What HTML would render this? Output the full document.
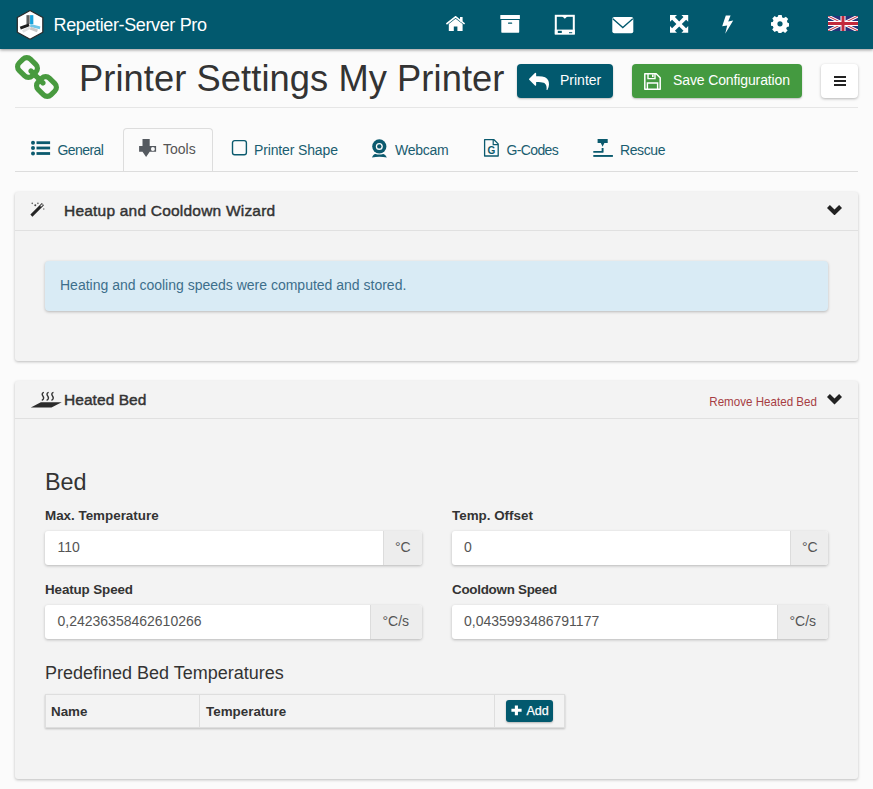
<!DOCTYPE html>
<html><head><meta charset="utf-8">
<style>
*{box-sizing:border-box;margin:0;padding:0}
html,body{width:873px;height:789px;overflow:hidden;background:#fbfbfb;font-family:"Liberation Sans",sans-serif;color:#333}
.a{position:absolute}
.t{position:absolute;white-space:nowrap;line-height:1}
#hdr{left:0;top:0;width:873px;height:49px;background:#02596e;box-shadow:0 1px 3px rgba(0,0,0,.42);z-index:5}
.btn{position:absolute;border-radius:4px;box-shadow:0 1px 2px rgba(0,0,0,.25)}
.panel{position:absolute;left:15px;width:843px;background:#f3f3f3;border-radius:3px;box-shadow:0 1px 3px rgba(0,0,0,.25)}
.ph{position:absolute;left:0;top:0;width:843px;border-bottom:1px solid #e0e0e0}
.lbl{font-weight:bold;font-size:13.4px;color:#333}
.inp{position:absolute;height:34px;background:#fff;border-radius:3px;box-shadow:0 1px 3px rgba(0,0,0,.25);overflow:hidden}
.addon{position:absolute;top:0;right:0;height:34px;background:#ededed;border-left:1px solid #dcdcdc}
.val{font-size:14px;color:#555}
.tab{font-size:14px;color:#1a5d70}
</style></head><body>
<div id="hdr" class="a">
<svg class="a" style="left:12px;top:6px" width="38" height="38" viewBox="0 0 789 789">
<polygon points="375,95 640,240 640,545 375,690 110,545 110,240" fill="#fff" stroke="#2a2a2a" stroke-width="26" stroke-linejoin="round"/>
<path d="M333 190 V378" stroke="#5f5f5f" stroke-width="66"/>
<path d="M409 190 V378" stroke="#17a3dc" stroke-width="68"/>
<path d="M172 458 L355 392" stroke="#1e1e1e" stroke-width="62"/>
<path d="M380 402 L584 455" stroke="#6ec6e8" stroke-width="56"/>
<path d="M222 530 L370 450" stroke="#e2e2e2" stroke-width="56"/>
<path d="M380 458 L528 515" stroke="#c9c9c9" stroke-width="60"/>
</svg>
<div class="t" style="left:53.5px;top:16px;font-size:18px;letter-spacing:-0.37px;color:#fff">Repetier-Server Pro</div>
<svg class="a" style="left:446px;top:16px" width="19" height="15" viewBox="0 0 19 15">
<path d="M0.4 8 L9.6 0.8 L18.6 8" fill="none" stroke="#fff" stroke-width="1.6" stroke-linejoin="miter"/>
<rect x="14" y="1" width="2.6" height="4.5" fill="#fff"/>
<path d="M2.8 8 L9.6 2.7 L16.6 8 V15 H11.4 V10.6 H7.8 V15 H2.8 Z" fill="#fff"/>
</svg>
<svg class="a" style="left:500px;top:15px" width="20" height="18" viewBox="0 0 20 18">
<rect x="0.3" y="0" width="19.6" height="4.1" fill="#fff" rx="0.3"/>
<rect x="1.3" y="4.9" width="17.9" height="12.8" fill="#fff" rx="0.6"/>
<rect x="8" y="7.4" width="4.2" height="1.4" fill="#02596e" rx="0.5"/>
</svg>
<svg class="a" style="left:554px;top:14px" width="22" height="21" viewBox="0 0 22 21">
<rect x="1.8" y="1.8" width="18" height="17.4" fill="none" stroke="#fff" stroke-width="2"/>
<rect x="0.8" y="15.6" width="20" height="5" fill="#fff"/>
<rect x="3.8" y="16.8" width="4" height="2.2" fill="#02596e"/>
<rect x="15" y="18.2" width="3.2" height="1" fill="#02596e"/>
<path d="M7.6 1.8 L10.8 4.8 L14 1.8 Z" fill="#fff"/>
</svg>
<svg class="a" style="left:611.5px;top:16.5px" width="22" height="17" viewBox="0 0 22 17">
<rect x="0.3" y="0" width="21" height="16.3" rx="2" fill="#fff"/>
<path d="M0.8 1.8 L10.8 10.6 L20.8 1.8" fill="none" stroke="#02596e" stroke-width="1.3"/>
</svg>
<svg class="a" style="left:670px;top:15px" width="19" height="18" viewBox="0 0 19 18">
<path d="M0 0 H7 L4.9 2.1 L9.2 6.4 L13.5 2.1 L11.4 0 H18.2 V6.8 L16.1 4.7 L11.8 9 L16.1 13.2 L18.2 11.1 V17.8 H11.4 L13.5 15.7 L9.2 11.4 L4.9 15.7 L7 17.8 H0 V11.1 L2.1 13.2 L6.4 9 L2.1 4.7 L0 6.8 Z" fill="#fff"/>
</svg>
<svg class="a" style="left:722px;top:15px" width="12" height="19" viewBox="0 0 120 190">
<path d="M38 5 H86 L62 66 L112 56 L32 188 L52 104 L2 112 Z" fill="#fff"/>
</svg>
<svg class="a" style="left:771px;top:15px" width="18" height="18" viewBox="0 0 18 18">
<path fill="#fff" fill-rule="evenodd" d="M7.3 0 H10.7 L11.2 2.4 L12.9 3.1 L14.9 1.8 L17.2 4.1 L15.9 6.1 L16.6 7.8 L18 8.2 V11.6 L15.9 12 L15.2 13.7 L16.6 15.6 L14.1 18 L12.2 16.6 L10.6 17.3 V18 H7.4 L7 16.6 L5.3 15.9 L3.6 17.1 L1.2 14.6 L2.5 12.8 L1.8 11.1 L0 10.7 V7.3 L1.8 6.9 L2.5 5.2 L1.3 3.5 L3.7 1.1 L5.4 2.3 L7 1.6 Z M9 6.2 A2.6 2.6 0 1 0 9 11.4 A2.6 2.6 0 1 0 9 6.2 Z"/>
</svg>
<svg class="a" style="left:828px;top:16px" width="30" height="15" viewBox="0 0 60 30" preserveAspectRatio="none">
<rect width="60" height="30" fill="#27337a"/>
<path d="M0,0 L60,30 M60,0 L0,30" stroke="#fff" stroke-width="6"/>
<path d="M0,0 L60,30 M60,0 L0,30" stroke="#c22a3c" stroke-width="2"/>
<path d="M30,0 V30 M0,15 H60" stroke="#fff" stroke-width="10"/>
<path d="M30,0 V30 M0,15 H60" stroke="#c22a3c" stroke-width="6"/>
</svg>
</div>
<svg class="a" style="left:15.2px;top:54.9px" width="44" height="44" viewBox="80 16 1632 1632"><path fill="#489a3f" d="M1520 1216q0-40-28-68l-208-208q-28-28-68-28-42 0-72 32 3 3 19 18.5t21.5 21.5 15 19 13 25.5 3.5 27.5q0 40-28 68t-68 28q-15 0-27.5-3.5t-25.5-13-19-15-21.5-21.5-18.5-19q-33 31-33 73 0 40 28 68l206 207q27 27 68 27 40 0 68-26l147-146q28-28 28-67zm-703-705q0-40-28-68l-206-207q-28-28-68-28-39 0-68 27l-147 146q-28 28-28 67 0 40 28 68l208 208q27 27 68 27 42 0 72-31-3-3-19-18.5t-21.5-21.5-15-19-13-25.5-3.5-27.5q0-40 28-68t68-28q15 0 27.5 3.5t25.5 13 19 15 21.5 21.5 18.5 19q33-31 33-73zm895 705q0 120-85 203l-147 146q-83 83-203 83-121 0-204-85l-206-207q-83-83-83-203 0-123 88-209l-88-88q-86 88-208 88-120 0-204-84l-208-208q-84-84-84-204t85-203l147-146q83-83 203-83 121 0 204 85l206 207q83 83 83 203 0 123-88 209l88 88q86-88 208-88 120 0 204 84l208 208q84 84 84 204z"/></svg>
<div class="t" style="left:79px;top:61.3px;font-size:36.3px;color:#333;letter-spacing:0.07px">Printer Settings My Printer</div>
<div class="btn" style="left:517px;top:64px;width:96px;height:34px;background:#02596e">
<svg class="a" style="left:12px;top:7.8px" width="20" height="18" viewBox="0 0 1792 1600"><path fill="#fff" d="M1792 1120q0 166-127 451-3 7-10.5 24t-13.5 30-13 22q-12 17-28 17-15 0-23.5-10t-8.5-25q0-9 2.5-26.5t2.5-23.5q5-68 5-123 0-101-17.5-181t-48.5-138.5-80-101-105.5-69.5-133-42.5-154-21.5-175.5-6h-224v256q0 26-19 45t-45 19-45-19l-512-512q-19-19-19-45t19-45l512-512q19-19 45-19t45 19 19 45v256h224q713 0 875 403 53 134 53 333z"/></svg>
<div class="t" style="left:43px;top:9px;font-size:14px;color:#fff">Printer</div>
</div>
<div class="btn" style="left:632px;top:64px;width:170px;height:34px;background:#449a40">
<svg class="a" style="left:12.4px;top:9px" width="17" height="17" viewBox="0 0 17 17">
<path d="M0.8 0.8 H12.2 L16.2 4.8 V16.2 H0.8 Z" fill="none" stroke="#fff" stroke-width="1.5" stroke-linejoin="round"/>
<path d="M4 0.8 V5.6 H11 V0.8" fill="none" stroke="#fff" stroke-width="1.4"/>
<rect x="8" y="1.5" width="1.6" height="2.6" fill="#fff"/>
<path d="M3.4 16.2 V10 H13.6 V16.2" fill="none" stroke="#fff" stroke-width="1.4"/>
</svg>
<div class="t" style="left:41px;top:9px;font-size:14px;color:#fff;letter-spacing:-0.12px">Save Configuration</div>
</div>
<div class="btn" style="left:821px;top:64px;width:37px;height:34px;background:#fff;box-shadow:0 1px 3px rgba(0,0,0,.28)">
<div class="a" style="left:13px;top:12px;width:12px;height:2px;background:#222"></div>
<div class="a" style="left:13px;top:16px;width:12px;height:2px;background:#222"></div>
<div class="a" style="left:13px;top:20px;width:12px;height:2px;background:#222"></div>
</div>
<div class="a" style="left:15px;top:107px;width:843px;height:1px;background:#e6e6e6"></div>
<!-- tabs -->
<div class="a" style="left:123px;top:128px;width:90px;height:44px;border:1px solid #dddddd;border-bottom:none;border-radius:4px 4px 0 0;background:#fbfbfb"></div>
<div class="a" style="left:15px;top:171px;width:843px;height:1px;background:#dddddd"></div>
<svg class="a" style="left:30px;top:140px" width="21" height="16" viewBox="0 0 21 16">
<circle cx="3" cy="2.7" r="2" fill="#0b5a6e"/><circle cx="3" cy="8" r="2" fill="#0b5a6e"/><circle cx="3" cy="13.5" r="2" fill="#0b5a6e"/>
<rect x="6.5" y="1.3" width="13.6" height="2.8" fill="#0b5a6e"/><rect x="6.5" y="6.6" width="13.6" height="2.8" fill="#0b5a6e"/><rect x="6.5" y="12.1" width="13.6" height="2.8" fill="#0b5a6e"/>
</svg>
<div class="t tab" style="left:57.5px;top:143px;letter-spacing:-0.58px">General</div>
<svg class="a" style="left:138px;top:138px" width="20" height="20" viewBox="0 0 20 20">
<path d="M4.5 1.1 H11.7 V8.1 H18.1 V13.7 H11.7 L8.1 19 L4.5 13.7 H1.1 V8.1 H4.5 Z" fill="#555a60"/>
<circle cx="14.9" cy="11.1" r="2" fill="#fbfbfb"/>
</svg>
<div class="t tab" style="left:163px;top:142px;color:#555">Tools</div>
<svg class="a" style="left:231px;top:139px" width="17" height="17" viewBox="0 0 17 17">
<rect x="1.5" y="1.6" width="13.9" height="14.2" rx="2.2" fill="none" stroke="#0b5a6e" stroke-width="1.4"/>
</svg>
<div class="t tab" style="left:254px;top:143px;letter-spacing:-0.14px">Printer Shape</div>
<svg class="a" style="left:370px;top:137px" width="19" height="22" viewBox="0 0 19 22">
<circle cx="9.3" cy="9.4" r="7.1" fill="#0b5a6e"/>
<circle cx="9.3" cy="9.4" r="3.5" fill="#fbfbfb"/>
<circle cx="9.3" cy="9.4" r="2.2" fill="#0b5a6e"/>
<path d="M2 20.4 Q3.5 16.6 5.5 16.9 Q9.3 18 13.1 16.9 Q15.1 16.6 16.9 20.4 Q9.3 19 2 20.4 Z" fill="#0b5a6e"/>
</svg>
<div class="t tab" style="left:395px;top:143px;letter-spacing:-0.26px">Webcam</div>
<svg class="a" style="left:482px;top:138px" width="18" height="20" viewBox="0 0 18 20">
<path d="M2.6 1.7 H12 L16.2 5.9 V18 H2.6 Z" fill="none" stroke="#0b5a6e" stroke-width="1.3" stroke-linejoin="round"/>
<path d="M11.2 1.8 V6.7 H16" fill="none" stroke="#0b5a6e" stroke-width="1.2"/>
<text x="9.4" y="15.9" font-family="Liberation Sans" font-weight="bold" font-size="10" fill="#0b5a6e" text-anchor="middle">G</text>
</svg>
<div class="t tab" style="left:506.5px;top:143px;letter-spacing:-0.63px">G-Codes</div>
<svg class="a" style="left:592px;top:138px" width="22" height="20" viewBox="0 0 22 20">
<path d="M5.6 1 H15.7 V4.9 H12.4 L10.6 8.8 L8.8 4.9 H5.6 Z" fill="#0b5a6e"/>
<path d="M10.6 10 V13.9 H1.3" fill="none" stroke="#0b5a6e" stroke-width="1.9" stroke-linejoin="round"/>
<rect x="1.3" y="17" width="19.6" height="1.9" fill="#0b5a6e"/>
</svg>
<div class="t tab" style="left:620px;top:143px;letter-spacing:-0.4px">Rescue</div>
<!-- panel 1 -->
<div class="panel" style="top:192px;height:169px">
<div class="ph" style="height:39px"></div>
</div>
<svg class="a" style="left:24px;top:196px" width="28" height="28" viewBox="0 0 789 789">
<path d="M208 553 L532 229" stroke="#262626" stroke-width="82" stroke-linecap="butt"/>
<path d="M468 293 L522 239" stroke="#f2f2f2" stroke-width="34"/>
<circle cx="232" cy="207" r="22" fill="#555"/><circle cx="318" cy="258" r="28" fill="#444"/><circle cx="392" cy="207" r="22" fill="#555"/><circle cx="558" cy="368" r="20" fill="#666"/>
</svg>
<div class="t" style="left:64px;top:203px;font-size:15.5px;letter-spacing:0.21px;-webkit-text-stroke:0.45px #333;color:#333">Heatup and Cooldown Wizard</div>
<svg class="a" style="left:827px;top:204.5px" width="15" height="10.5" viewBox="0 0 15 10.5"><path d="M0 2.9 L2.9 0 L7.5 4.6 L12.1 0 L15 2.9 L7.5 10.4 Z" fill="#222"/></svg>
<div class="a" style="left:45px;top:261px;width:783px;height:50px;background:#d9ebf5;border-radius:4px;box-shadow:0 1px 3px rgba(0,0,0,.25)"></div>
<div class="t" style="left:60px;top:278.2px;font-size:14px;color:#3d6f8c">Heating and cooling speeds were computed and stored.</div>
<!-- panel 2 -->
<div class="panel" style="top:381px;height:398px">
<div class="ph" style="height:38px"></div>
</div>
<svg class="a" style="left:26px;top:386px" width="40" height="28" viewBox="0 0 873 611">
<path d="M105 470 L325 352 L780 352 L555 470 Z" fill="#2b2b2b"/>
<path d="M390 140 Q345 150 355 195 Q385 240 385 265 Q380 305 345 310 M495 140 Q450 150 460 195 Q490 240 490 265 Q485 305 450 310 M600 140 Q555 150 565 195 Q595 240 595 265 Q590 305 555 310" fill="none" stroke="#333" stroke-width="30"/>
</svg>
<div class="t" style="left:64px;top:392px;font-size:15.5px;letter-spacing:0.06px;-webkit-text-stroke:0.45px #333;color:#333">Heated Bed</div>
<div class="t" style="left:709.3px;top:396.3px;font-size:11.6px;color:#a63d43;transform:scaleY(1.13);transform-origin:0 85%">Remove Heated Bed</div>
<svg class="a" style="left:827px;top:394px" width="15" height="10.5" viewBox="0 0 15 10.5"><path d="M0 2.9 L2.9 0 L7.5 4.6 L12.1 0 L15 2.9 L7.5 10.4 Z" fill="#222"/></svg>
<div class="t" style="left:45px;top:471px;font-size:23.4px;color:#333">Bed</div>
<div class="t lbl" style="left:45px;top:508.5px">Max. Temperature</div>
<div class="inp" style="left:45px;top:531px;width:377px"><div class="t val" style="left:12.5px;top:9px">110</div><div class="addon" style="width:39px"><div class="t val" style="left:11px;top:9px">°C</div></div></div>
<div class="t lbl" style="left:45px;top:582.5px;letter-spacing:-0.12px">Heatup Speed</div>
<div class="inp" style="left:45px;top:605px;width:377px"><div class="t val" style="left:12.5px;top:9px">0,24236358462610266</div><div class="addon" style="width:52px"><div class="t val" style="left:11.5px;top:9px">°C/s</div></div></div>
<div class="t lbl" style="left:452px;top:508.5px">Temp. Offset</div>
<div class="inp" style="left:452px;top:531px;width:376px"><div class="t val" style="left:12px;top:9px">0</div><div class="addon" style="width:38px"><div class="t val" style="left:11px;top:9px">°C</div></div></div>
<div class="t lbl" style="left:452px;top:582.5px;letter-spacing:-0.27px">Cooldown Speed</div>
<div class="inp" style="left:452px;top:605px;width:376px"><div class="t val" style="left:12px;top:9px">0,0435993486791177</div><div class="addon" style="width:51px"><div class="t val" style="left:11.5px;top:9px">°C/s</div></div></div>
<div class="t" style="left:45px;top:663.7px;font-size:18px;color:#333">Predefined Bed Temperatures</div>
<div class="a" style="left:45px;top:694px;width:520px;height:34px;background:#f3f3f3;border:1px solid #dedede;box-shadow:0 1px 2px rgba(0,0,0,.22)">
<div class="a" style="left:153px;top:0;width:1px;height:32px;background:#dedede"></div>
<div class="a" style="left:448px;top:0;width:1px;height:32px;background:#dedede"></div>
</div>
<div class="t lbl" style="left:51px;top:705px">Name</div>
<div class="t lbl" style="left:206px;top:705px">Temperature</div>
<div class="btn" style="left:506px;top:700px;width:47px;height:22px;background:#02596e;border-radius:3px">
<svg class="a" style="left:4.6px;top:5px" width="11" height="11" viewBox="0 0 11 11"><path d="M5.4 0.6 V10.2 M0.4 5.2 H10.6" stroke="#fff" stroke-width="3.1"/></svg>
<div class="t" style="left:20.5px;top:5px;font-size:12.5px;color:#fff;-webkit-text-stroke:0.25px #fff">Add</div>
</div>
</body></html>
